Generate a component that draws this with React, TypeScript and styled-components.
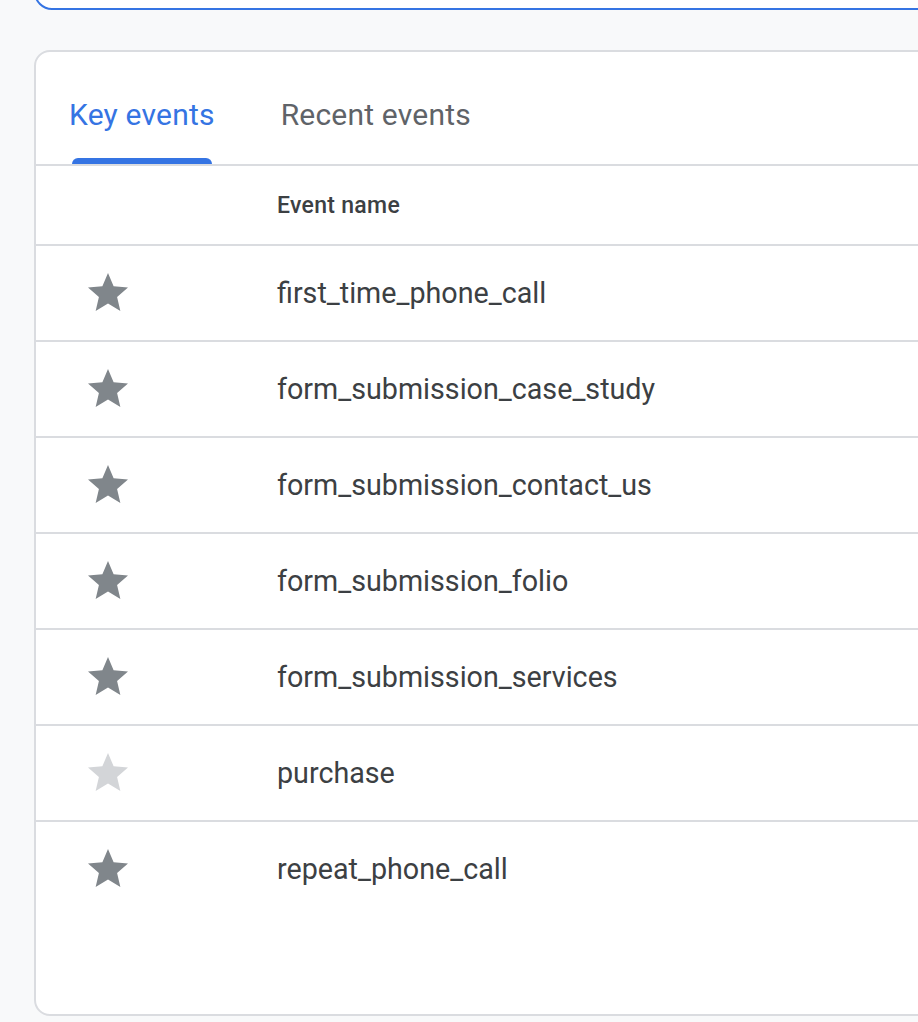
import React from "react";
import styled, { createGlobalStyle } from "styled-components";

const GlobalStyle = createGlobalStyle`
  html, body {
    margin: 0;
    padding: 0;
    background: #f8f9fa;
    overflow: hidden;
    font-family: Roboto, "Liberation Sans", Arial, sans-serif;
  }
`;

const Page = styled.div`
  padding-left: 34px;
  width: 1100px;
  display: flex;
  flex-direction: column;
  gap: 40px;
`;

const SearchCard = styled.div`
  margin-top: -40px;
  height: 50px;
  box-sizing: border-box;
  border: 2px solid #3574e3;
  border-radius: 18px;
  background: #ffffff;
`;

const Card = styled.section`
  height: 966px;
  box-sizing: border-box;
  border: 2px solid #dadce0;
  border-radius: 16px;
  background: #ffffff;
  display: flex;
  flex-direction: column;
`;

const TabList = styled.div`
  display: flex;
  padding-top: 16px;
  border-bottom: 2px solid #dadce0;
`;

const Tab = styled.div<{ $active?: boolean }>`
  position: relative;
  height: 96px;
  padding: 0 33px;
  display: flex;
  align-items: center;
  font-family: Roboto, "Liberation Sans", Arial, sans-serif;
  font-size: 30px;
  line-height: 1;
  font-weight: 400;
  letter-spacing: 0.2px;
  color: ${(p) => (p.$active ? "#3574e3" : "#5f6368")};
`;

const Label = styled.span`
  position: relative;
  top: -1px;
`;

const Indicator = styled.span`
  position: absolute;
  left: 36px;
  right: 36px;
  bottom: 0;
  height: 6px;
  border-radius: 6px 6px 0 0;
  background: #3574e3;
`;

const Row = styled.div<{ $header?: boolean; $last?: boolean }>`
  display: grid;
  grid-template-columns: 241px 1fr;
  align-items: center;
  height: ${(p) => (p.$header ? "78px" : "94px")};
  border-bottom: ${(p) => (p.$last ? "none" : "2px solid #dadce0")};
`;

const StarCell = styled.div`
  padding-left: 48px;
  display: flex;
  align-items: center;
`;

const HeaderText = styled.div`
  font-size: 23px;
  font-weight: 500;
  color: #3c4043;
  letter-spacing: 0.3px;
`;

const NameText = styled.div`
  font-size: 28.7px;
  font-weight: 400;
  color: #3c4043;
  letter-spacing: 0;
`;

const StarIcon = ({ active }: { active: boolean }) => (
  <svg width="48" height="48" viewBox="0 0 24 24" aria-hidden="true">
    <path
      fill={active ? "#80868b" : "#d3d5d8"}
      d="M12 17.27L18.18 21l-1.64-7.03L22 9.24l-7.19-.61L12 2 9.19 8.63 2 9.24l5.46 4.73L5.82 21z"
    />
  </svg>
);

const events = [
  { name: "first_time_phone_call", key: true },
  { name: "form_submission_case_study", key: true },
  { name: "form_submission_contact_us", key: true },
  { name: "form_submission_folio", key: true },
  { name: "form_submission_services", key: true },
  { name: "purchase", key: false },
  { name: "repeat_phone_call", key: true },
];

export default function App() {
  return (
    <>
      <GlobalStyle />
      <Page>
        <SearchCard />
        <Card>
          <TabList>
            <Tab $active>
              <Label>Key events</Label>
              <Indicator />
            </Tab>
            <Tab>
              <Label>Recent events</Label>
            </Tab>
          </TabList>
          <Row $header>
            <div />
            <HeaderText>Event name</HeaderText>
          </Row>
          {events.map((e, i) => (
            <Row key={e.name} $last={i === events.length - 1}>
              <StarCell>
                <StarIcon active={e.key} />
              </StarCell>
              <NameText>{e.name}</NameText>
            </Row>
          ))}
        </Card>
      </Page>
    </>
  );
}
